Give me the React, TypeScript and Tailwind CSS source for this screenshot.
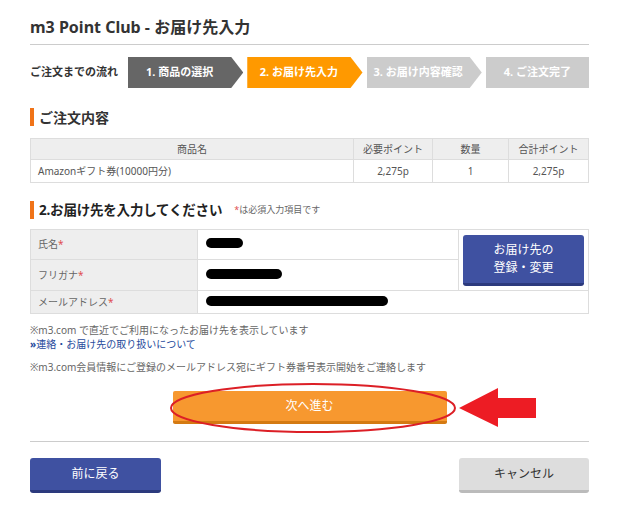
const font = "font-['Noto_Sans','Noto_Sans_CJK_JP',sans-serif]";

function Redact({ w }: { w: string }) {
  return <span className={`inline-block h-[10px] rounded-full bg-black ${w}`} />;
}

export default function App() {
  return (
    <div className={`relative h-[507px] w-[619px] overflow-hidden bg-white px-[30px] pt-[15px] text-[#333] ${font}`}>
      {/* Title */}
      <h1 className="text-[16px] font-bold leading-[24px] text-[#333]">m3 Point Club - お届け先入力</h1>
      <div className="mt-[5px] border-t border-[#cccccc]" />

      {/* Steps */}
      <div className="mt-[12px] flex h-[31px] items-stretch gap-[4px]">
        <div className="flex w-[94px] shrink-0 items-center text-[11px] font-bold text-[#333]">ご注文までの流れ</div>
        <div className="flex flex-1 items-center justify-center bg-[#666666] pr-[12px] text-[11px] font-bold text-white [clip-path:polygon(0_0,calc(100%_-_12px)_0,100%_50%,calc(100%_-_12px)_100%,0_100%)]">
          1. 商品の選択
        </div>
        <div className="flex flex-1 items-center justify-center bg-[#ff9900] pr-[12px] text-[11px] font-bold text-white [clip-path:polygon(0_0,calc(100%_-_12px)_0,100%_50%,calc(100%_-_12px)_100%,0_100%)]">
          2. お届け先入力
        </div>
        <div className="flex flex-1 items-center justify-center bg-[#cccccc] pr-[12px] text-[11px] font-bold text-white [clip-path:polygon(0_0,calc(100%_-_12px)_0,100%_50%,calc(100%_-_12px)_100%,0_100%)]">
          3. お届け内容確認
        </div>
        <div className="flex flex-1 items-center justify-center bg-[#cccccc] text-[11px] font-bold text-white">
          4. ご注文完了
        </div>
      </div>

      {/* Order contents */}
      <h2 className="mt-[20px] flex h-[18px] items-center border-l-4 border-[#f07318] pl-[5px] text-[14px] font-bold text-[#333]">
        ご注文内容
      </h2>
      <table className="mt-[12px] w-full border-collapse text-[10px] text-[#555]">
        <thead>
          <tr className="h-[21px] bg-[#eeeeee]">
            <th className="border border-[#dddddd] font-normal">商品名</th>
            <th className="w-[79px] border border-[#dddddd] font-normal">必要ポイント</th>
            <th className="w-[76px] border border-[#dddddd] font-normal">数量</th>
            <th className="w-[80px] border border-[#dddddd] font-normal">合計ポイント</th>
          </tr>
        </thead>
        <tbody>
          <tr className="h-[23px]">
            <td className="border border-[#dddddd] pl-[7px]">Amazonギフト券(10000円分)</td>
            <td className="border border-[#dddddd] text-center">2,275p</td>
            <td className="border border-[#dddddd] text-center">1</td>
            <td className="border border-[#dddddd] text-center">2,275p</td>
          </tr>
        </tbody>
      </table>

      {/* Delivery form */}
      <div className="mt-[18px] flex h-[18px] items-center border-l-4 border-[#f07318] pl-[5px]">
        <h2 className="text-[13.5px] font-bold tracking-[-0.2px] text-[#222]">2.お届け先を入力してください</h2>
        <span className="ml-[12px] text-[9px] text-[#666]">
          <span className="text-[#e05050]">*</span>は必須入力項目です
        </span>
      </div>
      <table className="mt-[10px] w-full border-collapse text-[10px] text-[#666]">
        <tbody>
          <tr className="h-[30px]">
            <td className="w-[167px] border border-[#dddddd] bg-[#eeeeee] pl-[7px]">
              氏名<span className="text-[#e05050]">*</span>
            </td>
            <td className="border border-[#dddddd] pl-[8px]">
              <Redact w="w-[37px]" />
            </td>
            <td rowSpan={2} className="w-[130px] border border-[#dddddd] px-[4px]">
              <button className="flex h-[51px] w-full flex-col items-center justify-center rounded-[3px] border-b-[3px] border-[#2c3a7d] bg-[#3f51a1] text-[12px] leading-[18px] text-white">
                <span>お届け先の</span>
                <span>登録・変更</span>
              </button>
            </td>
          </tr>
          <tr className="h-[31px]">
            <td className="border border-[#dddddd] bg-[#eeeeee] pl-[7px]">
              フリガナ<span className="text-[#e05050]">*</span>
            </td>
            <td className="border border-[#dddddd] pl-[8px]">
              <Redact w="w-[76px]" />
            </td>
          </tr>
          <tr className="h-[23px]">
            <td className="border border-[#dddddd] bg-[#eeeeee] pl-[7px]">
              メールアドレス<span className="text-[#e05050]">*</span>
            </td>
            <td colSpan={2} className="border border-[#dddddd] pl-[8px]">
              <Redact w="w-[182px]" />
            </td>
          </tr>
        </tbody>
      </table>

      {/* Notes */}
      <div className="mt-[9px] text-[10px] leading-[14px] text-[#666]">
        <p>※m3.com で直近でご利用になったお届け先を表示しています</p>
        <p className="text-[#1f4a9c]">
          <span className="font-bold">»</span>連絡・お届け先の取り扱いについて
        </p>
        <p className="mt-[9px]">※m3.com会員情報にご登録のメールアドレス宛にギフト券番号表示開始をご連絡します</p>
      </div>

      {/* Next */}
      <div className="relative mt-[17px]">
        <button className="mx-auto flex h-[33px] w-[274px] items-center justify-center rounded-[2px] border-b-[3px] border-[#d47a12] bg-[#f7982f] text-[12px] text-white">
          次へ進む
        </button>
        <svg className="pointer-events-none absolute left-0 top-[-10px]" width="559" height="55" viewBox="0 0 559 55">
          <ellipse cx="283" cy="27" rx="142" ry="24" fill="none" stroke="#dc1f26" strokeWidth="2" />
          <polygon points="429,27 468,7 468,17 506,17 506,37 468,37 468,46" fill="#ed1c24" />
        </svg>
      </div>
      <div className="mt-[17px] border-t border-[#cccccc]" />

      {/* Bottom buttons */}
      <div className="mt-[16px] flex justify-between">
        <button className="flex h-[35px] w-[131px] items-center justify-center rounded-[3px] border-b-[3px] border-[#2c3a7d] bg-[#3f51a1] text-[12px] text-white">
          前に戻る
        </button>
        <button className="flex h-[35px] w-[130px] items-center justify-center rounded-[3px] border-b-[3px] border-[#bbbbbb] bg-[#dddddd] text-[12px] text-[#333]">
          キャンセル
        </button>
      </div>
    </div>
  );
}
